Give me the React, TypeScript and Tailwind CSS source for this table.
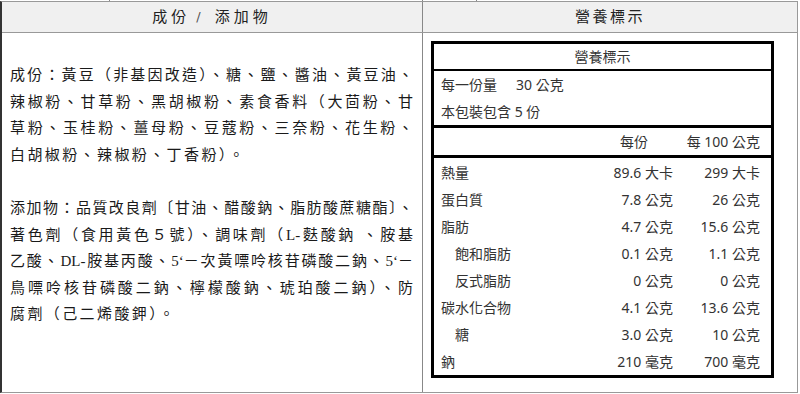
import React from "react";

const serif = "font-['Liberation_Serif','Noto_Sans_CJK_TC',serif]";
const sans = "font-['Noto_Sans','Noto_Sans_CJK_TC',sans-serif]";

const para1 = [
  "成份：黃豆（非基因改造）、糖、鹽、醬油、黃豆油、",
  "辣椒粉、甘草粉、黑胡椒粉、素食香料（大茴粉、甘",
  "草粉、玉桂粉、薑母粉、豆蔻粉、三奈粉、花生粉、",
];
const para1Last = "白胡椒粉、辣椒粉、丁香粉）。";
const para2 = [
  "添加物：品質改良劑〔甘油、醋酸鈉、脂肪酸蔗糖酯〕、",
  "著色劑（食用黃色５號）、調味劑（L-麩酸鈉 、胺基",
  "乙酸、DL-胺基丙酸、5‘－次黃嘌呤核苷磷酸二鈉、5‘－",
  "鳥嘌呤核苷磷酸二鈉、檸檬酸鈉、琥珀酸二鈉）、防",
];
const para2Last = "腐劑（己二烯酸鉀）。";

const rows: { label: string; a: string; b: string; indent?: boolean }[] = [
  { label: "熱量", a: "89.6 大卡", b: "299 大卡" },
  { label: "蛋白質", a: "7.8 公克", b: "26 公克" },
  { label: "脂肪", a: "4.7 公克", b: "15.6 公克" },
  { label: "飽和脂肪", a: "0.1 公克", b: "1.1 公克", indent: true },
  { label: "反式脂肪", a: "0 公克", b: "0 公克", indent: true },
  { label: "碳水化合物", a: "4.1 公克", b: "13.6 公克" },
  { label: "糖", a: "3.0 公克", b: "10 公克", indent: true },
  { label: "鈉", a: "210 毫克", b: "700 毫克" },
];

function JLine({ text }: { text: string }) {
  return <div className="text-justify [text-align-last:justify] whitespace-nowrap">{text}</div>;
}

export default function App() {
  return (
    <div className="w-[800px] h-[394px] bg-white overflow-hidden">
      {/* fragment of previous table */}
      <div className="flex h-[1px]">
        <div className="w-[110px] border-r border-[#888]" />
        <div className="w-[313px] border-r border-[#888]" />
        <div className="w-[54px] border-r border-[#888]" />
      </div>
      <div className="w-[798px] border-t border-b border-r border-[#999] border-l-2 border-l-[#333]">
        {/* header */}
        <div className="flex h-[31px] bg-[#f0f0f0] border-b border-[#999]">
          <div className={`w-[421px] border-r border-[#888] flex items-center justify-center text-[15px] tracking-[4px] text-[#222] ${serif}`}>
            <span>成份</span>
            <span className="ml-[6px] mr-[10px] font-['DejaVu_Sans',sans-serif] text-[13px] text-[#555]">/</span>
            <span>添加物</span>
          </div>
          <div className={`flex-1 flex items-center justify-center text-[15px] tracking-[2.5px] text-[#222] ${serif}`}>
            營養標示
          </div>
        </div>
        {/* body */}
        <div className="flex h-[359px]">
          <div className={`w-[421px] border-r border-[#888] pl-[8px] pr-[9px] pt-[29px] text-[15px] leading-[26.6px] text-[#1a1a1a] ${serif}`}>
            {para1.map((t) => (
              <JLine key={t} text={t} />
            ))}
            <div className="tracking-[2.4px] whitespace-nowrap">{para1Last}</div>
            <div className="h-[26.6px]" />
            {para2.map((t) => (
              <JLine key={t} text={t} />
            ))}
            <div className="tracking-[2.4px] whitespace-nowrap">{para2Last}</div>
          </div>
          <div className="flex-1 pl-[8px] pr-[23px] pt-[8px]">
            <div className={`border-[3px] border-black text-[14px] text-[#333] ${sans}`}>
              <div className="h-[27px] flex items-center justify-center border-b-2 border-black">營養標示</div>
              <div className="h-[27px] flex items-center pl-[7px]">
                <span>每一份量</span>
                <span className="ml-[19px]">30 公克</span>
              </div>
              <div className="h-[27px] flex items-center pl-[7px]">本包裝包含 5 份</div>
              <div className="h-[27px] flex items-center border-t-[3px] border-b-[3px] border-black box-content pr-[11px]">
                <div className="flex-1" />
                <div className="w-[80px] text-right pr-[25px]">每份</div>
                <div className="w-[87px] text-right">每 100 公克</div>
              </div>
              <div className="pt-[1px]">
                {rows.map((r) => (
                  <div key={r.label} className="h-[27px] flex items-center pl-[7px] pr-[11px]">
                    <div className={`flex-1 ${r.indent ? "pl-[14px]" : ""}`}>{r.label}</div>
                    <div className="w-[80px] text-right">{r.a}</div>
                    <div className="w-[87px] text-right">{r.b}</div>
                  </div>
                ))}
              </div>
            </div>
          </div>
        </div>
      </div>
    </div>
  );
}
